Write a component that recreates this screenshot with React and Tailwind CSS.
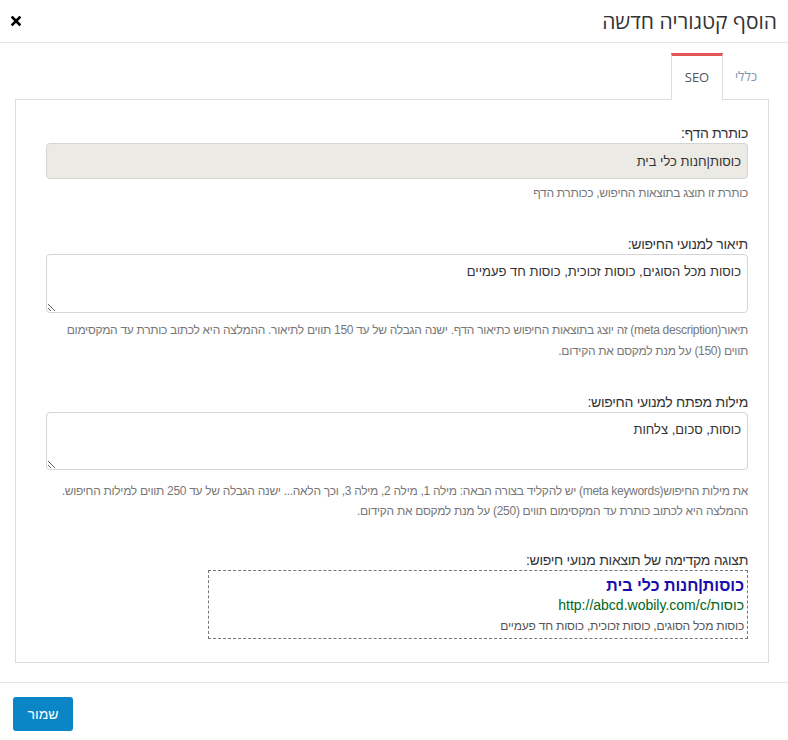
import { useState } from 'react';

const labelCls = 'block text-[14px] leading-[20px] tracking-[-0.3px] text-[#333]';
const helpCls = 'text-[12px] tracking-[-0.3px] text-[#777]';
const boxCls = 'block w-full border border-[#d5d5d5] rounded-[4px] text-[13px] text-[#333] outline-none';

function Field({ label, children }) {
  return (
    <div>
      <label className={labelCls}>{label}</label>
      {children}
    </div>
  );
}

export default function App() {
  const [tab, setTab] = useState('seo');

  return (
    <div dir="rtl" className="w-[788px] h-[740px] bg-white text-[#333] font-['Liberation_Sans',Arial,sans-serif]">
      {/* header */}
      <div className="h-[43px] flex items-center justify-between pr-[11px] pl-[11px] border-b border-[#e5e5e5]">
        <h1 className="text-[21px] leading-none font-['Open_Sans','Liberation_Sans',sans-serif] text-[#333] pt-[1px]">
          הוסף קטגוריה חדשה
        </h1>
        <button className="leading-none">
          <svg width="10" height="10" viewBox="0 0 10 10">
            <path d="M1.5 1.5 L8.5 8.5 M8.5 1.5 L1.5 8.5" stroke="black" strokeWidth="2.6" strokeLinecap="square" />
          </svg>
        </button>
      </div>

      {/* tabs */}
      <div className="mt-[10px] mr-[19px] ml-[15px]">
        <div className="flex h-[46px] relative z-10">
          <button
            onClick={() => setTab('general')}
            className="w-[46px] h-[46px] text-[13px] text-[#7d93b2] font-['Open_Sans','Liberation_Sans',sans-serif] pt-[2px]"
          >
            כללי
          </button>
          <button
            onClick={() => setTab('seo')}
            className="w-[52px] h-[47px] bg-white border-x border-[#ddd] border-t-[3px] border-t-[#e4555a] text-[13px] text-[#555] font-['Open_Sans','Liberation_Sans',sans-serif]"
          >
            SEO
          </button>
        </div>

        <div className="border border-[#ddd] pt-[23px] pb-[23px] pr-[20px] pl-[30px] flex flex-col">
          <Field label="כותרת הדף:">
            <input
              readOnly
              defaultValue="כוסות|חנות כלי בית"
              className={`${boxCls} h-[36px] px-[6px] bg-[#ebeae4]`}
            />
          </Field>
          <p className={`${helpCls} leading-[20px] mt-[4px]`}>כותרת זו תוצג בתוצאות החיפוש, ככותרת הדף</p>

          <div className="mt-[31px]">
            <Field label="תיאור למנועי החיפוש:">
              <textarea
                readOnly
                defaultValue="כוסות מכל הסוגים, כוסות זכוכית, כוסות חד פעמיים"
                className={`${boxCls} bg-white h-[59px] px-[6px] py-[7px]`}
              />
            </Field>
          </div>
          <p className={`${helpCls} leading-[21px] mt-[7px]`}>
            תיאור(meta description) זה יוצג בתוצאות החיפוש כתיאור הדף. ישנה הגבלה של עד 150 תווים לתיאור. ההמלצה היא לכתוב כותרת עד המקסימום תווים (150) על מנת למקסם את הקידום.
          </p>

          <div className="mt-[30px]">
            <Field label="מילות מפתח למנועי החיפוש:">
              <textarea
                readOnly
                defaultValue="כוסות, סכום, צלחות"
                className={`${boxCls} bg-white h-[58px] px-[6px] py-[7px]`}
              />
            </Field>
          </div>
          <p className={`${helpCls} leading-[20px] mt-[11px]`}>
            את מילות החיפוש(meta keywords) יש להקליד בצורה הבאה: מילה 1, מילה 2, מילה 3, וכך הלאה... ישנה הגבלה של עד 250 תווים למילות החיפוש. ההמלצה היא לכתוב כותרת עד המקסימום תווים (250) על מנת למקסם את הקידום.
          </p>

          <div className="mt-[29px]">
            <label className={labelCls}>תצוגה מקדימה של תוצאות מנועי חיפוש:</label>
            <div className="w-[540px] border border-dashed border-[#777] pr-[3px] pt-[5px] pb-[2px]">
              <div className="text-[16px] leading-[20px] font-bold text-[#1a0dab]">כוסות|חנות כלי בית</div>
              <div dir="ltr" className="text-right text-[14px] leading-[18px] text-[#006621]">http://abcd.wobily.com/c/כוסות</div>
              <div className="text-[12px] leading-[20px] tracking-[-0.2px] text-[#545454] mt-[2px]">כוסות מכל הסוגים, כוסות זכוכית, כוסות חד פעמיים</div>
            </div>
          </div>
        </div>
      </div>

      {/* footer */}
      <div className="mt-[19px] border-t border-[#e5e5e5] pt-[14px] pl-[13px] flex justify-end">
        <button className="w-[60px] h-[34px] bg-[#0a86c6] rounded-[3px] text-white text-[14px]">שמור</button>
      </div>
    </div>
  );
}
